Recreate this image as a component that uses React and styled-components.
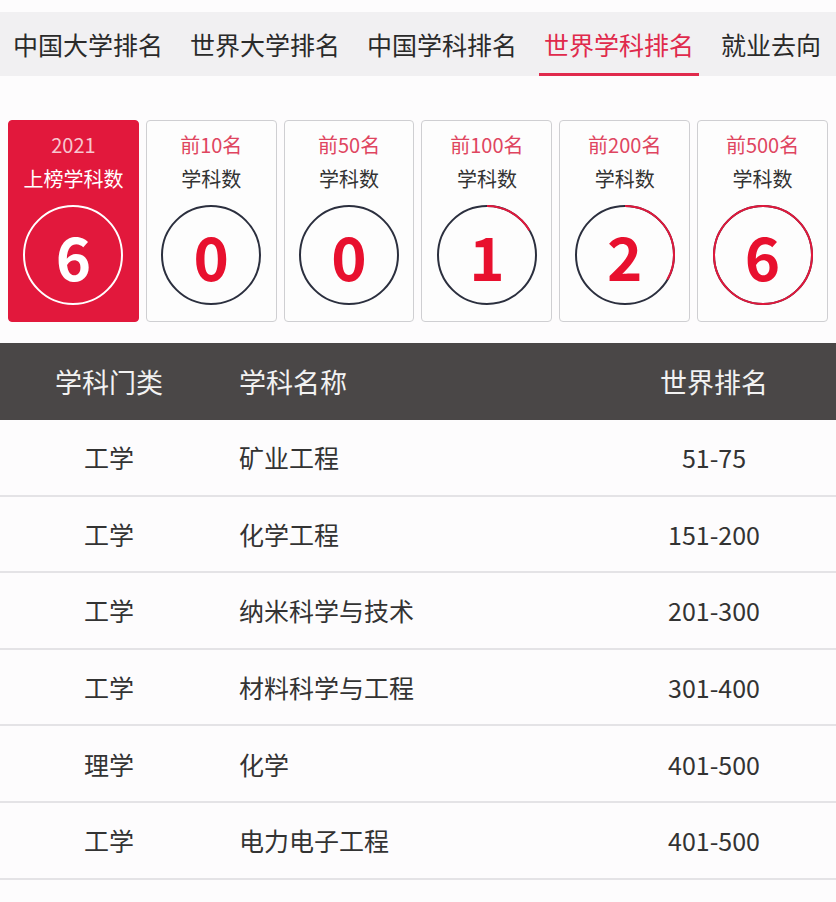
import React from 'react'
import styled, { createGlobalStyle } from 'styled-components'

const RED = '#e2183c'
const NAVY = '#2b2f3e'

const GlobalStyle = createGlobalStyle`
    body {
        margin: 0;
        background: #fdfcfd;
        font-family: "Noto Sans CJK SC", "Noto Sans", sans-serif;
        color: #333;
    }
`

const Page = styled.div`
    width: 836px;
    padding-top: 12px;
`

const TabBar = styled.div`
    display: flex;
    gap: 17px;
    height: 64px;
    padding-left: 8px;
    background: #f1f0f2;
    overflow: hidden;
`

const Tab = styled.div`
    display: flex;
    align-items: center;
    padding: 0 5px;
    padding-top: 3px;
    height: 64px;
    box-sizing: border-box;
    font-size: 25px;
    white-space: nowrap;
    color: ${({ active }) => (active ? '#e02a4c' : '#2a2a2a')};
    border-bottom: 3px solid ${({ active }) => (active ? '#e02a4c' : 'transparent')};
`

const Cards = styled.div`
    display: grid;
    grid-template-columns: repeat(6, 1fr);
    gap: 7px;
    padding: 0 8px;
    margin-top: 44px;
`

const Card = styled.div`
    display: flex;
    flex-direction: column;
    align-items: center;
    height: 202px;
    box-sizing: border-box;
    padding-top: 9px;
    border-radius: 4px;
    background: ${({ highlight }) => (highlight ? RED : '#fdfdfd')};
    border: 1px solid ${({ highlight }) => (highlight ? RED : '#cfcfd2')};
`

const Top = styled.div`
    height: 30px;
    line-height: 30px;
    font-size: 20px;
    color: ${({ highlight }) => (highlight ? '#f7c6cf' : '#df4560')};
`

const Label = styled.div`
    height: 34px;
    line-height: 34px;
    margin-top: 2px;
    font-size: 20px;
    color: ${({ highlight }) => (highlight ? '#fff' : '#333')};
`

const Ring = styled.div`
    position: relative;
    width: 100px;
    height: 100px;
    margin-top: 9px;
    display: flex;
    align-items: center;
    justify-content: center;

    svg {
        position: absolute;
        inset: 0;
    }
`

const Count = styled.span`
    position: relative;
    font-size: 60px;
    font-weight: 700;
    line-height: 1;
    color: ${({ highlight }) => (highlight ? '#fff' : '#e8102e')};
`

const Table = styled.div`
    margin-top: 21px;
`

const Row = styled.div`
    display: grid;
    grid-template-columns: 218px 1fr 200px;
    padding-right: 22px;
    align-items: center;
    height: ${({ head }) => (head ? '77px' : '74.6px')};
    background: ${({ head }) => (head ? '#4a4747' : 'transparent')};
    color: ${({ head }) => (head ? '#f2f2f2' : '#333')};
    font-size: ${({ head }) => (head ? '27px' : '25px')};
    border-bottom: ${({ head }) => (head ? 'none' : '2px solid #e4e3e6')};
`

const Cell = styled.div`
    text-align: ${({ left }) => (left ? 'left' : 'center')};
    padding-left: ${({ left }) => (left ? '21px' : '0')};
`

const Gauge = ({ value, total, highlight }) => {
    const r = 49
    const c = 2 * Math.PI * r
    const part = total ? value / total : 0
    return (
        <Ring>
            <svg width="100" height="100" viewBox="0 0 100 100">
                <circle cx="50" cy="50" r={r} fill="none" strokeWidth="2" stroke={highlight ? '#fff' : NAVY} />
                {!highlight && part > 0 && (
                    <circle
                        cx="50"
                        cy="50"
                        r={r}
                        fill="none"
                        strokeWidth="2"
                        stroke={RED}
                        strokeDasharray={`${c * part} ${c}`}
                        transform="rotate(-90 50 50)"
                    />
                )}
            </svg>
            <Count highlight={highlight}>{value}</Count>
        </Ring>
    )
}

const tabs = ['中国大学排名', '世界大学排名', '中国学科排名', '世界学科排名', '就业去向']

const stats = [
    { top: '前10名', value: 0 },
    { top: '前50名', value: 0 },
    { top: '前100名', value: 1 },
    { top: '前200名', value: 2 },
    { top: '前500名', value: 6 },
]

const subjects = [
    ['工学', '矿业工程', '51-75'],
    ['工学', '化学工程', '151-200'],
    ['工学', '纳米科学与技术', '201-300'],
    ['工学', '材料科学与工程', '301-400'],
    ['理学', '化学', '401-500'],
    ['工学', '电力电子工程', '401-500'],
]

export default function App() {
    const total = 6
    return (
        <Page>
            <GlobalStyle />
            <TabBar>
                {tabs.map((t, i) => (
                    <Tab key={t} active={i === 3}>
                        {t}
                    </Tab>
                ))}
            </TabBar>
            <Cards>
                <Card highlight>
                    <Top highlight>2021</Top>
                    <Label highlight>上榜学科数</Label>
                    <Gauge value={total} total={total} highlight />
                </Card>
                {stats.map((s) => (
                    <Card key={s.top}>
                        <Top>{s.top}</Top>
                        <Label>学科数</Label>
                        <Gauge value={s.value} total={total} />
                    </Card>
                ))}
            </Cards>
            <Table>
                <Row head>
                    <Cell>学科门类</Cell>
                    <Cell left>学科名称</Cell>
                    <Cell>世界排名</Cell>
                </Row>
                {subjects.map(([cat, name, rank], i) => (
                    <Row key={i}>
                        <Cell>{cat}</Cell>
                        <Cell left>{name}</Cell>
                        <Cell>{rank}</Cell>
                    </Row>
                ))}
            </Table>
        </Page>
    )
}
